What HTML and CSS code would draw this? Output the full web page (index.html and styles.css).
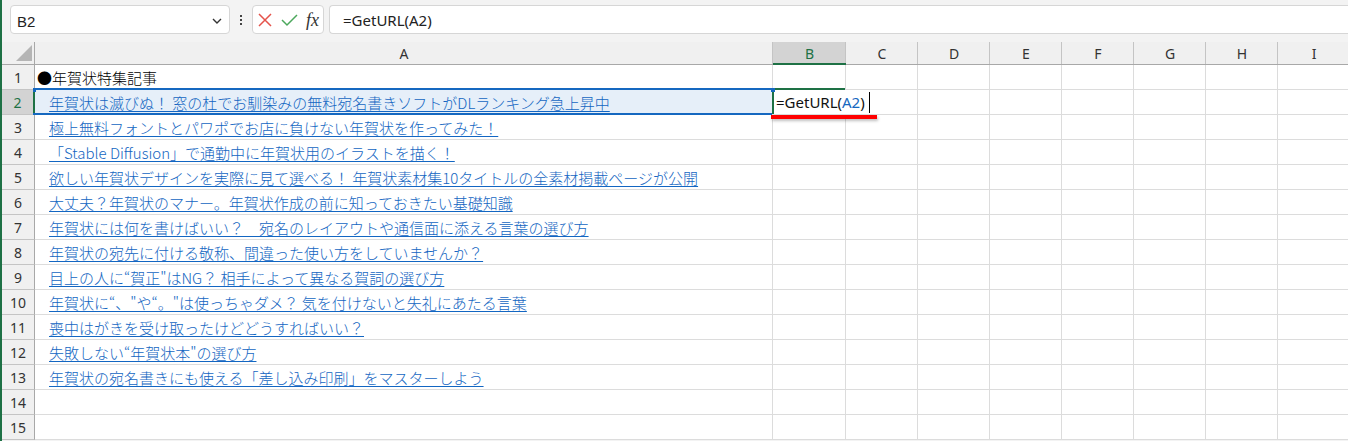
FILE: index.html
```html
<!DOCTYPE html>
<html lang="ja">
<head>
<meta charset="utf-8">
<title>Excel</title>
<link rel="stylesheet" href="styles.css">
</head>
<body>
<div class="app">
  <div class="fbar">
    <div class="namebox">
      <span class="nb-text">B2</span>
      <svg class="chev" width="10" height="6" viewBox="0 0 10 6"><path d="M1 1 L5 5 L9 1" fill="none" stroke="#333" stroke-width="1.4"/></svg>
    </div>
    <div class="dots"><span></span><span></span><span></span></div>
    <div class="iconbox">
      <svg class="ic" width="14" height="14" viewBox="0 0 14 14"><path d="M1 1 L13 13 M13 1 L1 13" stroke="#e5534b" stroke-width="1.5" fill="none"/></svg>
      <svg class="ic" width="17" height="14" viewBox="0 0 17 14"><path d="M1 7 L6 12 L16 2" stroke="#4ca85c" stroke-width="1.5" fill="none"/></svg>
      <span class="fx">fx</span>
    </div>
    <div class="fbox"><span class="ftext">=GetURL(A2)</span></div>
  </div>
  <div class="grid">
    <div class="ch corner"><span class="tri"></span></div>
    <div class="ch">A</div>
    <div class="ch act">B</div>
    <div class="ch">C</div>
    <div class="ch">D</div>
    <div class="ch">E</div>
    <div class="ch">F</div>
    <div class="ch">G</div>
    <div class="ch">H</div>
    <div class="ch">I</div>

    <div class="rh">1</div>
    <div class="c plain">●年賀状特集記事</div>
    <div class="c"></div><div class="c"></div><div class="c"></div><div class="c"></div><div class="c"></div><div class="c"></div><div class="c"></div><div class="c"></div>

    <div class="rh act">2</div>
    <div class="c sel"><span class="lk">年賀状は滅びぬ！ 窓の杜でお馴染みの無料宛名書きソフトがDLランキング急上昇中</span></div>
    <div class="c edit"><div class="editor"><span>=GetURL(</span><span class="ref">A2</span><span>)</span><span class="caret"></span></div><div class="redline"></div></div>
    <div class="c"></div><div class="c"></div><div class="c"></div><div class="c"></div><div class="c"></div><div class="c"></div><div class="c"></div>

    <div class="rh">3</div>
    <div class="c"><span class="lk">極上無料フォントとパワポでお店に負けない年賀状を作ってみた！</span></div>
    <div class="c"></div><div class="c"></div><div class="c"></div><div class="c"></div><div class="c"></div><div class="c"></div><div class="c"></div><div class="c"></div>

    <div class="rh">4</div>
    <div class="c"><span class="lk">「Stable Diffusion」で通勤中に年賀状用のイラストを描く！</span></div>
    <div class="c"></div><div class="c"></div><div class="c"></div><div class="c"></div><div class="c"></div><div class="c"></div><div class="c"></div><div class="c"></div>

    <div class="rh">5</div>
    <div class="c"><span class="lk">欲しい年賀状デザインを実際に見て選べる！ 年賀状素材集10タイトルの全素材掲載ページが公開</span></div>
    <div class="c"></div><div class="c"></div><div class="c"></div><div class="c"></div><div class="c"></div><div class="c"></div><div class="c"></div><div class="c"></div>

    <div class="rh">6</div>
    <div class="c"><span class="lk">大丈夫？年賀状のマナー。年賀状作成の前に知っておきたい基礎知識</span></div>
    <div class="c"></div><div class="c"></div><div class="c"></div><div class="c"></div><div class="c"></div><div class="c"></div><div class="c"></div><div class="c"></div>

    <div class="rh">7</div>
    <div class="c"><span class="lk">年賀状には何を書けばいい？　宛名のレイアウトや通信面に添える言葉の選び方</span></div>
    <div class="c"></div><div class="c"></div><div class="c"></div><div class="c"></div><div class="c"></div><div class="c"></div><div class="c"></div><div class="c"></div>

    <div class="rh">8</div>
    <div class="c"><span class="lk">年賀状の宛先に付ける敬称、間違った使い方をしていませんか？</span></div>
    <div class="c"></div><div class="c"></div><div class="c"></div><div class="c"></div><div class="c"></div><div class="c"></div><div class="c"></div><div class="c"></div>

    <div class="rh">9</div>
    <div class="c"><span class="lk">目上の人に“賀正"はNG？ 相手によって異なる賀詞の選び方</span></div>
    <div class="c"></div><div class="c"></div><div class="c"></div><div class="c"></div><div class="c"></div><div class="c"></div><div class="c"></div><div class="c"></div>

    <div class="rh">10</div>
    <div class="c"><span class="lk">年賀状に“、"や“。"は使っちゃダメ？ 気を付けないと失礼にあたる言葉</span></div>
    <div class="c"></div><div class="c"></div><div class="c"></div><div class="c"></div><div class="c"></div><div class="c"></div><div class="c"></div><div class="c"></div>

    <div class="rh">11</div>
    <div class="c"><span class="lk">喪中はがきを受け取ったけどどうすればいい？</span></div>
    <div class="c"></div><div class="c"></div><div class="c"></div><div class="c"></div><div class="c"></div><div class="c"></div><div class="c"></div><div class="c"></div>

    <div class="rh">12</div>
    <div class="c"><span class="lk">失敗しない“年賀状本"の選び方</span></div>
    <div class="c"></div><div class="c"></div><div class="c"></div><div class="c"></div><div class="c"></div><div class="c"></div><div class="c"></div><div class="c"></div>

    <div class="rh">13</div>
    <div class="c"><span class="lk">年賀状の宛名書きにも使える「差し込み印刷」をマスターしよう</span></div>
    <div class="c"></div><div class="c"></div><div class="c"></div><div class="c"></div><div class="c"></div><div class="c"></div><div class="c"></div><div class="c"></div>

    <div class="rh">14</div>
    <div class="c"></div><div class="c"></div><div class="c"></div><div class="c"></div><div class="c"></div><div class="c"></div><div class="c"></div><div class="c"></div><div class="c"></div>

    <div class="rh">15</div>
    <div class="c"></div><div class="c"></div><div class="c"></div><div class="c"></div><div class="c"></div><div class="c"></div><div class="c"></div><div class="c"></div><div class="c"></div>
  </div>
</div>
</body>
</html>
```

FILE: styles.css
```css
* { box-sizing: border-box; }
html, body { margin: 0; padding: 0; }
body {
  width: 1348px;
  height: 441px;
  overflow: hidden;
  background: #f3f3f3;
  font-family: "Noto Sans CJK JP", "Noto Sans", sans-serif;
  color: #222;
}
.app {
  height: 441px;
  border-left: 2px solid #1e7145;
  display: flex;
  flex-direction: column;
  overflow: hidden;
}
.fbar {
  height: 42px;
  flex: none;
  display: flex;
  align-items: flex-start;
  padding-top: 5px;
}
.namebox {
  margin-left: 8px;
  width: 220px;
  height: 29px;
  background: #fff;
  border: 1px solid #d6d6d6;
  border-radius: 4px;
  display: flex;
  align-items: center;
  justify-content: space-between;
  padding: 0 7px 0 6px;
}
.nb-text {
  font-family: "Liberation Sans", Arial, sans-serif;
  font-size: 15px;
  color: #222;
  padding-top: 3px;
}
.chev { margin-top: 2px; }
.dots {
  width: 22px;
  height: 29px;
  display: flex;
  flex-direction: column;
  align-items: center;
  justify-content: center;
  gap: 2px;
}
.dots span {
  width: 2px;
  height: 2px;
  background: #444;
}
.iconbox {
  width: 72px;
  height: 29px;
  background: #fff;
  border: 1px solid #d6d6d6;
  border-radius: 4px;
  display: flex;
  align-items: center;
  padding-left: 5px;
  gap: 9px;
}
.fx {
  font-family: "Liberation Serif", "Times New Roman", serif;
  font-style: italic;
  font-size: 18px;
  color: #333;
  line-height: 1;
  margin-left: -1px;
}
.fbox {
  margin-left: 5px;
  flex: 1;
  height: 29px;
  background: #fff;
  border: 1px solid #d6d6d6;
  border-right: none;
  border-radius: 4px 0 0 4px;
  display: flex;
  align-items: center;
  padding-left: 13px;
}
.ftext {
  font-family: "Noto Sans", "Liberation Sans", sans-serif;
  font-size: 15px;
  color: #222;
}
.grid {
  flex: none;
  display: grid;
  grid-template-columns: 33px 738px 73px repeat(7, 72px);
  grid-template-rows: 23px repeat(15, 25px);
  background: #fff;
}
.ch {
  background: #f0f0f0;
  border-bottom: 1px solid #a8a8a8;
  position: relative;
  display: flex;
  align-items: center;
  justify-content: center;
  font-family: "Noto Sans", "Liberation Sans", sans-serif;
  font-size: 14px;
  color: #333;
  padding-top: 1px;
}
.ch::after {
  content: "";
  position: absolute;
  right: 0;
  top: 0;
  bottom: 0;
  width: 1px;
  background: #c4c4c4;
}
.ch.corner::after { background: #a8a8a8; }
.ch.act {
  background: #d3d3d3;
  border-bottom: 2px solid #1e7145;
  color: #1e7145;
}
.tri {
  position: absolute;
  right: 3px;
  bottom: 3px;
  width: 0;
  height: 0;
  border-left: 16px solid transparent;
  border-bottom: 16px solid #b5b5b5;
}
.rh {
  background: #f0f0f0;
  border-right: 1px solid #a8a8a8;
  border-bottom: 1px solid #c4c4c4;
  display: flex;
  align-items: center;
  justify-content: center;
  font-family: "Noto Sans", "Liberation Sans", sans-serif;
  font-size: 14px;
  color: #333;
}
.rh.act {
  background: #d3d3d3;
  border-right: 2px solid #1e7145;
  color: #1e7145;
}
.c {
  border-right: 1px solid #dcdcdc;
  border-bottom: 1px solid #dcdcdc;
  display: flex;
  align-items: center;
  white-space: nowrap;
  font-size: 15px;
  font-weight: 300;
  padding-left: 14px;
  padding-top: 1px;
  position: relative;
}
.c.plain {
  padding-left: 2px;
  color: #000;
}
.lk {
  color: #1366c2;
  text-decoration: underline;
  text-underline-offset: 2px;
  text-decoration-thickness: 1px;
}
.c.sel {
  background: #e6eff9;
}
.c.sel::before {
  content: "";
  position: absolute;
  left: -2px;
  right: 0;
  top: -2px;
  bottom: -1px;
  border-top: 2px solid #1568c0;
  border-bottom: 2px solid #1568c0;
  pointer-events: none;
}
.c.sel::after {
  content: "";
  position: absolute;
  left: -2px;
  top: -2px;
  width: 3px;
  height: 4px;
  background: #1568c0;
}
.c.edit {
  padding: 0;
  overflow: visible;
  z-index: 2;
}
.c.edit::before {
  content: "";
  position: absolute;
  left: -1px;
  right: 0;
  top: -2px;
  height: 2px;
  background: #1e7145;
}
.c.edit::after {
  content: "";
  position: absolute;
  left: -2px;
  top: -2px;
  width: 4px;
  height: 4px;
  background: #1568c0;
}
.editor {
  position: absolute;
  left: -1px;
  top: 0;
  height: 24px;
  width: 103px;
  background: #fff;
  border-left: 2px solid #1e7145;
  display: flex;
  align-items: center;
  padding-left: 2px;
  font-family: "Noto Sans", "Liberation Sans", sans-serif;
  font-size: 15px;
  font-weight: 400;
  color: #111;
}
.ref { color: #1568c0; }
.caret {
  width: 1px;
  height: 21px;
  background: #000;
  margin-left: 4px;
}
.redline {
  position: absolute;
  left: -2px;
  top: 25px;
  width: 106px;
  height: 4px;
  background: #ff0000;
  box-shadow: 1px 2px 3px rgba(0,0,0,0.25);
}
```
